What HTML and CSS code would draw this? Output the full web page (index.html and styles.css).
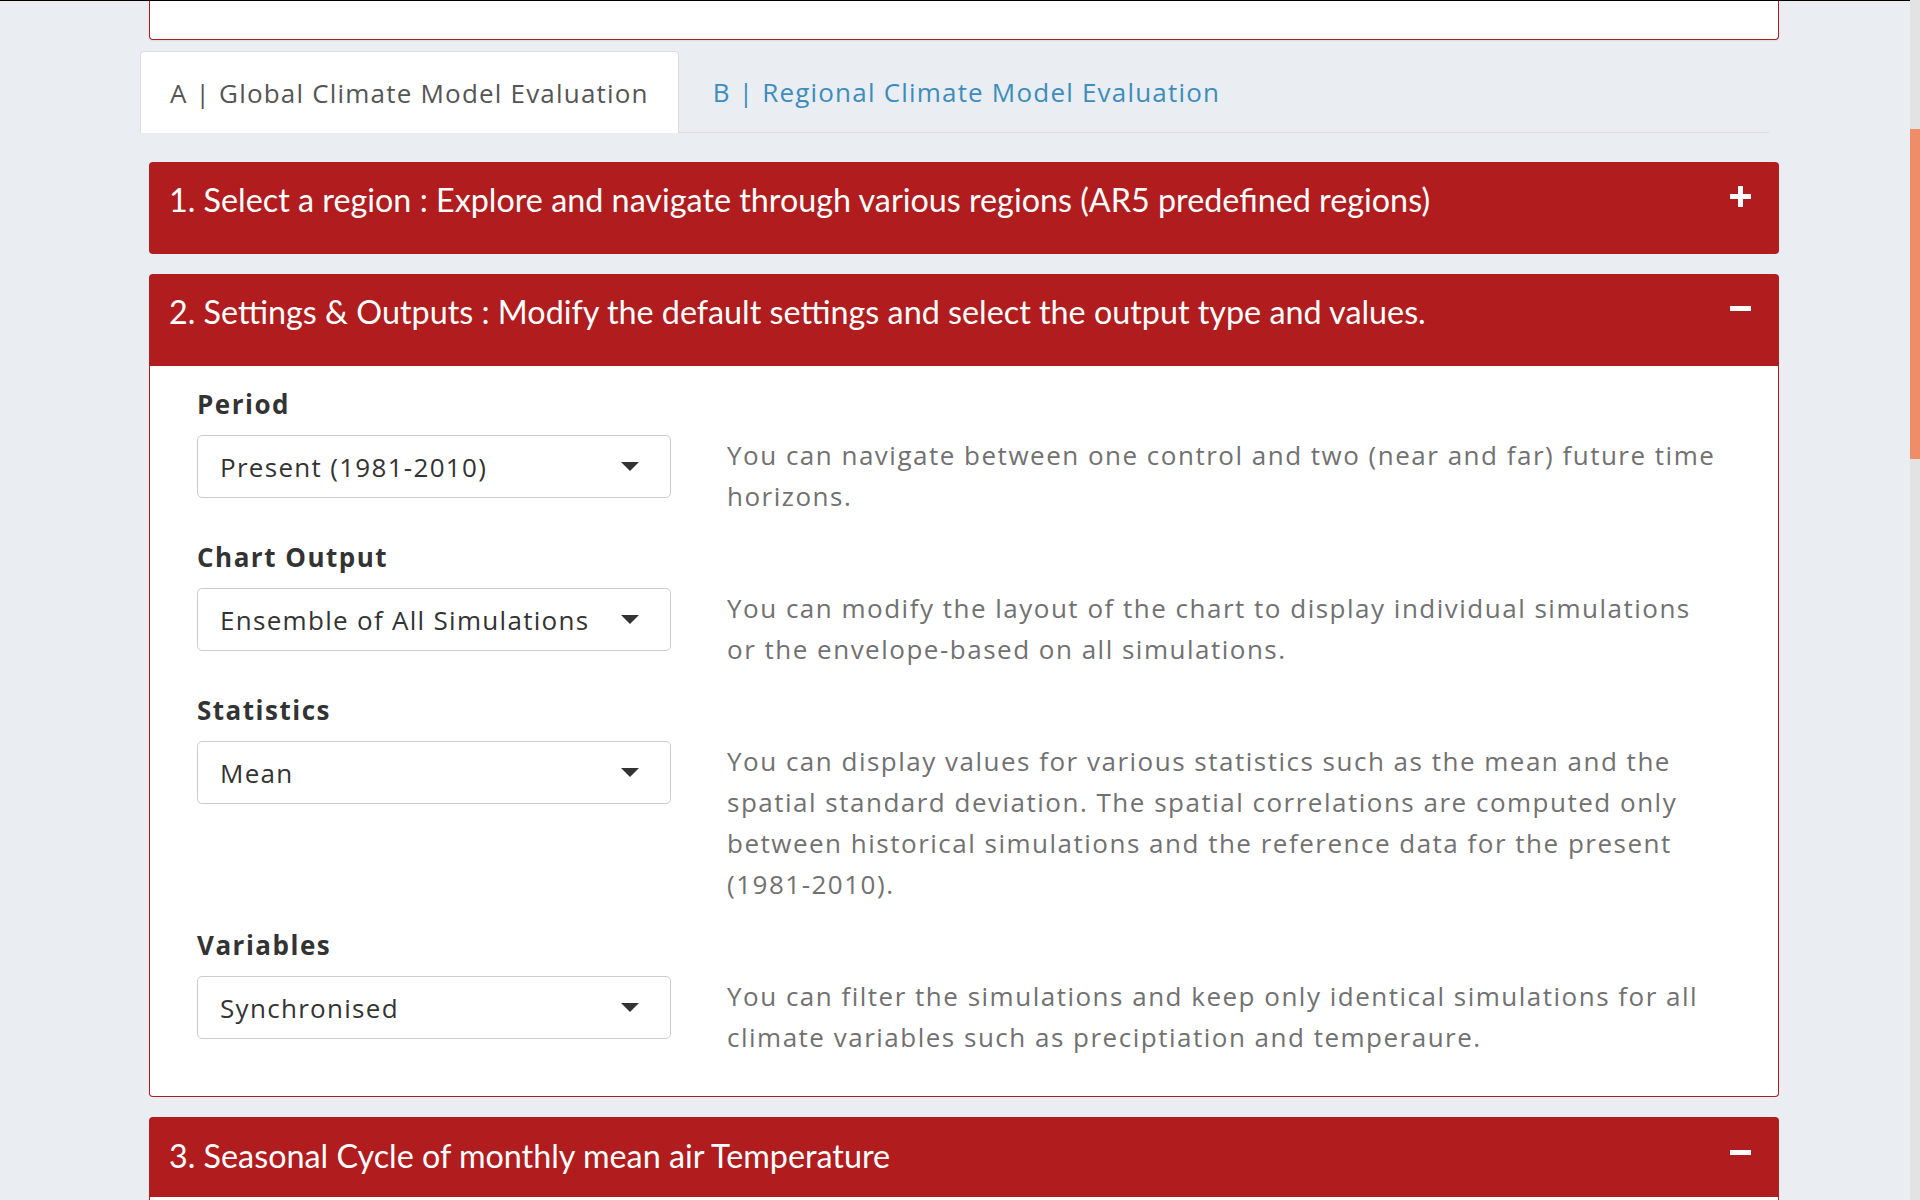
FILE: index.html
```html
<!DOCTYPE html>
<html lang="en">
<head>
<meta charset="utf-8">
<title>Climate Model Evaluation</title>
<link rel="stylesheet" href="styles.css">
</head>
<body>
<div class="page">
  <div class="container">
    <div class="top-box"></div>

    <div class="tabs">
      <div class="tab active">A | Global Climate Model Evaluation</div>
      <div class="tab">B | Regional Climate Model Evaluation</div>
    </div>

    <div class="panel">
      <div class="panel-head">
        <span class="panel-title">1. Select a region : Explore and navigate through various regions (AR5 predefined regions)</span>
        <svg class="tool" width="21" height="21" viewBox="0 0 21 21"><rect x="8" y="0" width="5" height="21" fill="#fff"/><rect x="0" y="8" width="21" height="5" fill="#fff"/></svg>
      </div>
    </div>

    <div class="panel">
      <div class="panel-head">
        <span class="panel-title">2. Settings &amp; Outputs : Modify the default settings and select the output type and values.</span>
        <svg class="tool" width="21" height="21" viewBox="0 0 21 21"><rect x="0" y="8" width="21" height="5" fill="#fff"/></svg>
      </div>
      <div class="panel-body">
        <div class="row">
          <div class="field">
            <div class="label">Period</div>
            <div class="select"><span>Present (1981-2010)</span><i class="caret"></i></div>
          </div>
          <p class="desc">You can navigate between one control and two (near and far) future time horizons.</p>
        </div>
        <div class="row">
          <div class="field">
            <div class="label">Chart Output</div>
            <div class="select"><span>Ensemble of All Simulations</span><i class="caret"></i></div>
          </div>
          <p class="desc">You can modify the layout of the chart to display individual simulations or the envelope-based on all simulations.</p>
        </div>
        <div class="row">
          <div class="field">
            <div class="label">Statistics</div>
            <div class="select"><span>Mean</span><i class="caret"></i></div>
          </div>
          <p class="desc">You can display values for various statistics such as the mean and the spatial standard deviation. The spatial correlations are computed only between historical simulations and the reference data for the present (1981-2010).</p>
        </div>
        <div class="row">
          <div class="field">
            <div class="label">Variables</div>
            <div class="select"><span>Synchronised</span><i class="caret"></i></div>
          </div>
          <p class="desc">You can filter the simulations and keep only identical simulations for all climate variables such as preciptiation and temperaure.</p>
        </div>
      </div>
    </div>

    <div class="panel">
      <div class="panel-head short">
        <span class="panel-title">3. Seasonal Cycle of monthly mean air Temperature</span>
        <svg class="tool" width="21" height="21" viewBox="0 0 21 21"><rect x="0" y="8" width="21" height="5" fill="#fff"/></svg>
      </div>
      <div class="panel-body stub"></div>
    </div>
  </div>
</div>
<div class="scrollbar"><div class="thumb"></div></div>
</body>
</html>
```

FILE: styles.css
```css
html, body {
  margin: 0;
  padding: 0;
  height: 1200px;
  overflow: hidden;
}
body {
  display: flex;
  background: #eaedf1;
  font-family: "Open Sans", "Liberation Sans", sans-serif;
  color: #333;
}
.page {
  flex: 1;
  min-width: 0;
  border-top: 1px solid #000;
}
.container {
  width: 1639px;
  margin-left: 140px;
}
.top-box {
  margin-left: 9px;
  height: 38px;
  background: #fff;
  border: 1px solid #b11c1e;
  border-top: none;
  border-radius: 0 0 4px 4px;
  box-shadow: 0 1px 2px rgba(0,0,0,0.08);
}
.tabs {
  display: flex;
  margin-top: 11px;
  margin-right: 10px;
  border-bottom: 1px solid #dcdcdc;
}
.tab {
  height: 80px;
  display: flex;
  align-items: center;
  padding: 0 29px;
  border: 1px solid transparent;
  border-bottom: none;
  margin-bottom: -1px;
  font-size: 26px;
  letter-spacing: 1.2px;
  color: #3c8dbc;
  margin-left: 4px;
}
.tab.active {
  margin-left: 0;
  background: #fff;
  color: #555;
  border-color: #dcdcdc;
  border-radius: 4px 4px 0 0;
  height: 81px;
}
.panel {
  margin-left: 9px;
  margin-top: 20px;
}
.tabs + .panel {
  margin-top: 29px;
}
.panel-head {
  height: 92px;
  box-sizing: border-box;
  background: #b11c1e;
  color: #fff;
  border-radius: 4px;
  display: flex;
  align-items: flex-start;
  justify-content: space-between;
  padding: 20px 28px 0 20px;
  font-family: Lato, "Open Sans", sans-serif;
  font-size: 32.3px;
  line-height: 36px;
}
.panel-head:not(:last-child) {
  border-radius: 4px 4px 0 0;
}
.panel-head.short {
  height: 80px;
  padding-top: 21px;
}
.tool {
  margin-top: 4px;
  flex: none;
}
.panel-body {
  background: #fff;
  border: 1px solid #b11c1e;
  border-top: none;
  border-radius: 0 0 4px 4px;
  padding: 23px 56px 38px 47px;
  display: flex;
  flex-direction: column;
  gap: 25px;
}
.panel-body.stub {
  height: 60px;
  padding: 0;
}
.row {
  display: grid;
  grid-template-columns: 474px 1fr;
  column-gap: 56px;
  align-items: start;
}
.label {
  font-weight: 700;
  font-size: 26px;
  letter-spacing: 1.5px;
  line-height: 30px;
  margin-bottom: 16px;
  color: #333;
}
.select {
  height: 63px;
  box-sizing: border-box;
  border: 1px solid #cccccc;
  border-radius: 5px;
  display: flex;
  align-items: center;
  justify-content: space-between;
  padding: 0 31px 0 22px;
  font-size: 26px;
  letter-spacing: 1.3px;
  color: #333;
}
.caret {
  width: 0;
  height: 0;
  border-left: 9px solid transparent;
  border-right: 9px solid transparent;
  border-top: 9px solid #333;
}
.desc {
  margin: 0;
  padding-top: 46px;
  font-size: 26px;
  letter-spacing: 1.5px;
  line-height: 41px;
  color: #717171;
}
.scrollbar {
  width: 10px;
  flex: none;
  background: #e3e3e3;
}
.thumb {
  margin-top: 129px;
  height: 330px;
  background: #ef8d66;
}
```
